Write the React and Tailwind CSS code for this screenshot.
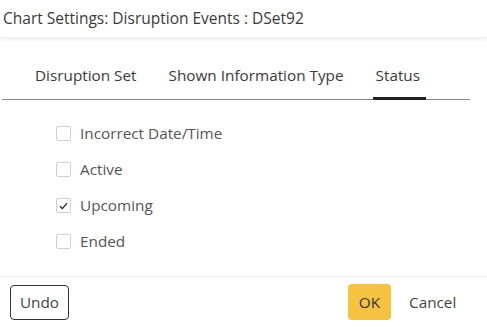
export default function App() {
  const items = [
    { label: "Incorrect Date/Time", checked: false },
    { label: "Active", checked: false },
    { label: "Upcoming", checked: true },
    { label: "Ended", checked: false },
  ];
  return (
    <div className="w-[487px] h-[327px] bg-white text-[#333] flex flex-col overflow-hidden" style={{ fontFamily: "'Open Sans', 'Noto Sans', sans-serif" }}>
      <div className="h-[38px] shrink-0 flex items-center pl-[3px] text-[15.5px] text-[#3a3a3a] shadow-[0_2px_3px_rgba(0,0,0,0.06)] border-b border-[#f0f0f0]">
        Chart Settings: Disruption Events : DSet92
      </div>
      <div className="mt-[26px] ml-[2px] w-[468px] border-b border-[#8a8a8a] flex text-[15.3px] text-[#3a3a3a]">
        <div className="ml-[33px] pb-[12px]">Disruption Set</div>
        <div className="ml-[32px] pb-[12px]">Shown Information Type</div>
        <div className="ml-[29px] pl-[3px] pr-[6px] pb-[9px] border-b-[3px] border-[#222] mb-[-1px]">Status</div>
      </div>
      <div className="flex flex-col gap-[20px] pl-[56px] pt-[26px]">
        {items.map((it) => (
          <div key={it.label} className="flex items-center h-[16px]">
            <div className="w-[15px] h-[15px] border border-[#cfcfcf] rounded-[2px] flex items-center justify-center">
              {it.checked && (
                <svg width="9" height="8" viewBox="0 0 9 8" fill="none">
                  <path d="M1 4.2 L3.4 6.6 L8 1.2" stroke="#222" strokeWidth="1.3" />
                </svg>
              )}
            </div>
            <span className="ml-[9px] text-[15.3px] text-[#555]">{it.label}</span>
          </div>
        ))}
      </div>
      <div className="mt-auto border-t border-[#eeeeee] h-[51px] flex items-center px-[10px]">
        <button className="h-[35px] w-[59px] border border-[#333] rounded-[4px] text-[15.3px] text-[#444]">Undo</button>
        <div className="ml-auto flex items-center">
          <button className="h-[36px] w-[43px] bg-[#f5c242] rounded-[4px] text-[15.3px] text-[#333]">OK</button>
          <button className="ml-[18px] mr-[16px] w-[52px] text-left text-[15.3px] text-[#444]">Cancel</button>
        </div>
      </div>
    </div>
  );
}
